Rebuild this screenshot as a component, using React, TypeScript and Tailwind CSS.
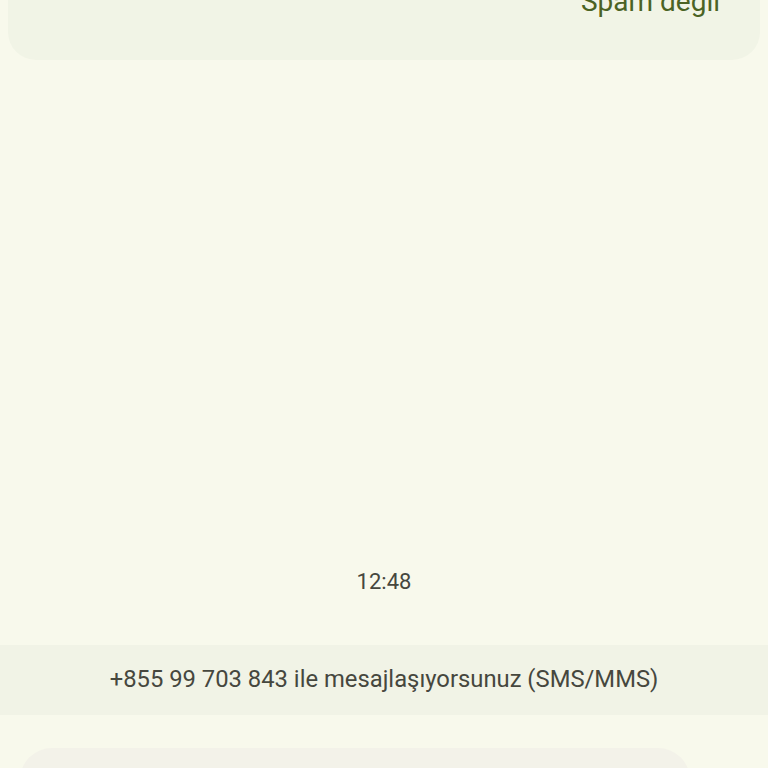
export default function App() {
  return (
    <div
      className="h-[768px] w-[768px] overflow-hidden bg-[#f8f9ec] flex flex-col"
      style={{ fontFamily: 'Roboto, "Noto Sans", sans-serif' }}
    >
      <div className="mx-2 -mt-[40px] h-[100px] shrink-0 rounded-[28px] bg-[#f1f4e6] pt-[25px] pr-[40px] flex justify-end">
        <span className="text-[28px] leading-[34px] text-[#4b6324]">Spam değil</span>
      </div>

      <div className="mt-[508px] h-[28px] shrink-0 text-center text-[22px] leading-[28px] text-[#46473e]">12:48</div>

      <div className="mt-[49px] h-[70px] shrink-0 bg-[#f1f3e6] flex items-center justify-center">
        <span className="text-[23.8px] text-[#46473e]">+855 99 703 843 ile mesajlaşıyorsunuz (SMS/MMS)</span>
      </div>

      <div className="mt-[33px] ml-[20px] w-[670px] h-[64px] shrink-0 rounded-[32px] bg-[#f3f2e9]" />
    </div>
  );
}
